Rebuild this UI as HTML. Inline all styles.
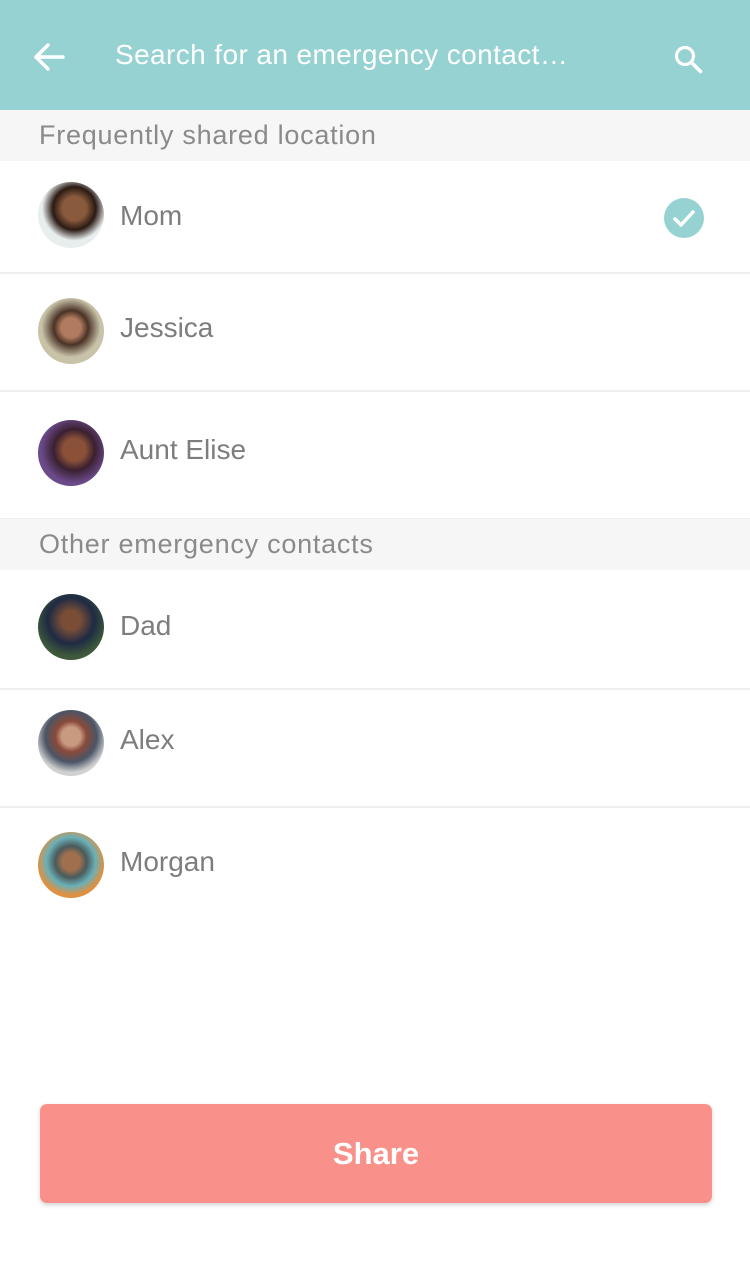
<!DOCTYPE html>
<html><head><meta charset="utf-8"><style>
*{margin:0;padding:0;box-sizing:border-box}
body{width:750px;height:1276px;background:#fff;font-family:"Liberation Sans",sans-serif;position:relative;overflow:hidden}
.hdr{position:absolute;left:0;top:0;width:750px;height:110px;background:#97d2d3}
.hdr .t{position:absolute;left:115px;top:39px;font-size:28px;color:#fff;letter-spacing:0.4px}
.sec{position:absolute;left:0;width:750px;height:51px;background:#f6f6f6;font-size:27px;color:#8a8a8a;padding-left:39px;line-height:51px;letter-spacing:0.75px}
.row{position:absolute;left:0;width:750px;border-bottom:2px solid #efefef}
.av{position:absolute;left:38px;width:66px;height:66px;border-radius:50%}
.nm{position:absolute;left:120px;font-size:28px;color:#7d7d7d}
.btn{position:absolute;left:40px;top:1104px;width:672px;height:99px;background:#f9918a;border-radius:7px;box-shadow:0 2px 5px rgba(0,0,0,.18);color:#fff;font-size:31px;font-weight:bold;text-align:center;line-height:99px}
</style></head><body>
<div class="hdr">
<svg style="position:absolute;left:33px;top:42px" width="32" height="30" viewBox="0 0 32 30"><path d="M30 15H4M15 3L3 15l12 12" stroke="#fff" stroke-width="3.5" fill="none" stroke-linecap="round" stroke-linejoin="round"/></svg>
<div class="t">Search for an emergency contact…</div>
<svg style="position:absolute;left:673px;top:44px" width="32" height="32" viewBox="0 0 32 32"><circle cx="12" cy="12" r="8.5" stroke="#fff" stroke-width="3.2" fill="none"/><path d="M18.5 18.5l9 9" stroke="#fff" stroke-width="3.6" stroke-linecap="round"/></svg>
</div>
<div class="sec" style="top:110px">Frequently shared location</div>
<div class="row" style="top:162px;height:112px">
<div class="av" style="top:20px;background:radial-gradient(circle at 55% 40%,#8a5a3c 0 22%,#2a1a14 40%,#e8eeee 60%)"></div>
<div class="nm" style="top:38px">Mom</div>
<div style="position:absolute;left:664px;top:36px;width:40px;height:40px;border-radius:50%;background:#97d2d3"></div>
<svg style="position:absolute;left:664px;top:36px" width="40" height="40"><path d="M11 21l6 6 12-13" stroke="#fff" stroke-width="3.5" fill="none" stroke-linecap="round" stroke-linejoin="round"/></svg>
</div>
<div class="row" style="top:274px;height:118px">
<div class="av" style="top:24px;background:radial-gradient(circle at 50% 45%,#b07b5e 0 20%,#4a3226 35%,#c8c2a8 60%)"></div>
<div class="nm" style="top:38px">Jessica</div>
</div>
<div class="row" style="top:392px;height:128px">
<div class="av" style="top:28px;background:radial-gradient(circle at 55% 45%,#8a5038 0 22%,#3a2030 40%,#6b4a8a 65%)"></div>
<div class="nm" style="top:42px">Aunt Elise</div>
</div>
<div class="sec" style="top:519px">Other emergency contacts</div>
<div class="row" style="top:570px;height:120px">
<div class="av" style="top:24px;background:radial-gradient(circle at 50% 40%,#7a4e36 0 18%,#1e2a44 45%,#3e5a3a 70%)"></div>
<div class="nm" style="top:40px">Dad</div>
</div>
<div class="row" style="top:690px;height:118px">
<div class="av" style="top:20px;background:radial-gradient(circle at 50% 40%,#c89a80 0 18%,#8a4a3a 30%,#4a5566 50%,#d0d0d0 70%)"></div>
<div class="nm" style="top:34px">Alex</div>
</div>
<div style="position:absolute;left:38px;top:832px;width:66px;height:66px;border-radius:50%;background:radial-gradient(circle at 50% 45%,#a0704e 0 18%,#4a5a5a 32%,#6ab0b8 50%,#e09040 68%)"></div>
<div class="nm" style="top:846px">Morgan</div>
<div class="btn">Share</div>
</body></html>
